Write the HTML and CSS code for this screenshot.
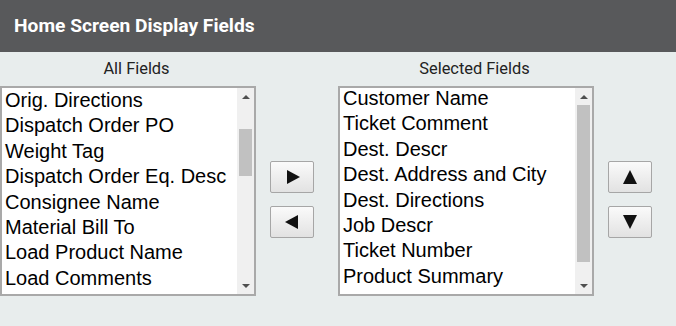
FILE: index.html
```html
<!DOCTYPE html>
<html>
<head>
<meta charset="utf-8">
<link rel="stylesheet" href="styles.css">
</head>
<body>
<div class="header">Home Screen Display Fields</div>
<div class="panel">
  <div class="col">
    <div class="label">All Fields</div>
    <div class="list">
      <div class="items">
        <div class="item">Orig. Directions</div>
        <div class="item">Dispatch Order PO</div>
        <div class="item">Weight Tag</div>
        <div class="item">Dispatch Order Eq. Desc</div>
        <div class="item">Consignee Name</div>
        <div class="item">Material Bill To</div>
        <div class="item">Load Product Name</div>
        <div class="item">Load Comments</div>
      </div>
      <div class="scrollbar">
        <div class="sb-arrow up"></div>
        <div class="sb-track"><div class="sb-thumb" style="margin-top:24px;height:47px"></div></div>
        <div class="sb-arrow down"></div>
      </div>
    </div>
  </div>
  <div class="buttons">
    <button class="btn"><span class="tri right"></span></button>
    <button class="btn"><span class="tri left"></span></button>
  </div>
  <div class="col">
    <div class="label">Selected Fields</div>
    <div class="list">
      <div class="items shifted">
        <div class="item">Customer Name</div>
        <div class="item">Ticket Comment</div>
        <div class="item">Dest. Descr</div>
        <div class="item">Dest. Address and City</div>
        <div class="item">Dest. Directions</div>
        <div class="item">Job Descr</div>
        <div class="item">Ticket Number</div>
        <div class="item">Product Summary</div>
      </div>
      <div class="scrollbar">
        <div class="sb-arrow up"></div>
        <div class="sb-track"><div class="sb-thumb" style="margin-top:0px;height:157px"></div></div>
        <div class="sb-arrow down"></div>
      </div>
    </div>
  </div>
  <div class="buttons">
    <button class="btn"><span class="tri up"></span></button>
    <button class="btn"><span class="tri down"></span></button>
  </div>
</div>
</body>
</html>
```
FILE: styles.css
```css
html, body {
  margin: 0;
  padding: 0;
  background: #e8eded;
  width: 676px;
  height: 326px;
  overflow: hidden;
}
.header {
  height: 52px;
  background: #58595b;
  color: #fff;
  font-family: Roboto, "Liberation Sans", sans-serif;
  font-weight: 700;
  font-size: 19.2px;
  line-height: 52px;
  padding-left: 14px;
  box-sizing: border-box;
}
.panel {
  display: flex;
  align-items: flex-start;
}
.col {
  display: flex;
  flex-direction: column;
  width: 256px;
}
.label {
  height: 34px;
  line-height: 34px;
  padding-left: 17px;
  text-align: center;
  font-family: Roboto, "Liberation Sans", sans-serif;
  font-size: 16.4px;
  color: #222;
}
.list {
  display: flex;
  height: 210px;
  border: 2px solid #a9a9a9;
  background: #fff;
  box-sizing: border-box;
  overflow: hidden;
}
.items {
  flex: 1;
  padding-left: 3px;
  font-family: "Liberation Sans", Arial, sans-serif;
  font-size: 20px;
  color: #000;
  overflow: hidden;
}
.items.shifted {
  margin-top: -2px;
}
.item {
  height: 25.4px;
  line-height: 25.4px;
  white-space: nowrap;
}
.scrollbar {
  width: 17px;
  background: #f0f0f0;
  display: flex;
  flex-direction: column;
}
.sb-arrow {
  height: 17px;
  display: flex;
  align-items: center;
  justify-content: center;
}
.sb-arrow::before {
  content: "";
  border-left: 4px solid transparent;
  border-right: 4px solid transparent;
}
.sb-arrow.up::before {
  border-bottom: 4px solid #505050;
}
.sb-arrow.down::before {
  border-top: 4px solid #505050;
}
.sb-track {
  flex: 1;
  padding: 0 2px;
}
.sb-thumb {
  background: #c1c1c1;
}
.buttons {
  width: 82px;
  padding-top: 109px;
  padding-left: 14px;
  box-sizing: border-box;
  display: flex;
  flex-direction: column;
  gap: 13px;
}
.btn {
  width: 44px;
  height: 32px;
  margin: 0;
  padding: 0;
  border: 1px solid #a6a6a6;
  border-radius: 2px;
  background: linear-gradient(#fafafa, #e2e2e2);
  display: flex;
  align-items: center;
  justify-content: center;
}
.tri {
  width: 0;
  height: 0;
}
.tri.right {
  border-top: 7px solid transparent;
  border-bottom: 7px solid transparent;
  border-left: 13px solid #111;
  margin-left: 2px;
}
.tri.left {
  border-top: 7px solid transparent;
  border-bottom: 7px solid transparent;
  border-right: 13px solid #111;
  margin-right: 2px;
}
.tri.up {
  border-left: 7px solid transparent;
  border-right: 7px solid transparent;
  border-bottom: 14px solid #111;
}
.tri.down {
  border-left: 7px solid transparent;
  border-right: 7px solid transparent;
  border-top: 14px solid #111;
}
```
